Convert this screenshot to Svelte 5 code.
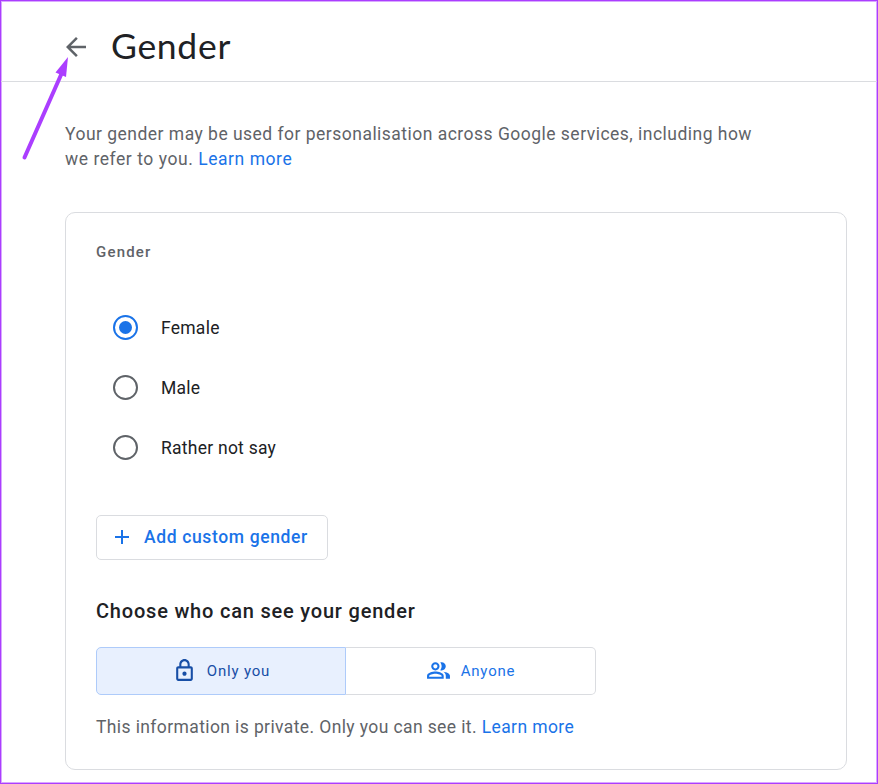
<script lang="ts">
  let gender = $state('Female');
  let visibility = $state('only');

  const options = ['Female', 'Male', 'Rather not say'];
</script>

<div class="page">
  <header>
    <button class="back" aria-label="Back">
      <svg width="30" height="30" viewBox="0 0 24 24" fill="currentColor">
        <path d="M20 11H7.83l5.59-5.59L12 4l-8 8 8 8 1.41-1.41L7.83 13H20v-2z" />
      </svg>
    </button>
    <h1>Gender</h1>
  </header>

  <main>
    <p class="intro">
      <span class="line-one">Your gender may be used for personalisation across Google services, including how</span><br />
      <span class="line-two">we refer to you. <a href="#more">Learn more</a></span>
    </p>

    <section class="card">
      <h2>Gender</h2>

      <div class="options" role="radiogroup">
        {#each options as option}
          <label>
            <input type="radio" name="gender" value={option} bind:group={gender} />
            <span class="radio"></span>
            <span class="option-text">{option}</span>
          </label>
        {/each}
      </div>

      <button class="add">
        <svg width="22" height="22" viewBox="0 0 22 22" stroke="currentColor" stroke-width="2">
          <path d="M11 4v14M4 11h14" />
        </svg>
        <span>Add custom gender</span>
      </button>

      <h3>Choose who can see your gender</h3>

      <div class="segments">
        <button class:selected={visibility === 'only'} onclick={() => (visibility = 'only')}>
          <svg width="25" height="25" viewBox="0 0 24 24" fill="currentColor">
            <path d="M18 8h-1V6c0-2.76-2.24-5-5-5S7 3.240 7 6v2H6c-1.100 0-2 .9-2 2v10c0 1.100.9 2 2 2h12c1.100 0 2-.9 2-2V10c0-1.100-.9-2-2-2zM9 6c0-1.660 1.340-3 3-3s3 1.340 3 3v2H9V6zm9 14H6V10h12v10zm-6-3c1.100 0 2-.9 2-2s-.9-2-2-2-2 .9-2 2 .9 2 2 2z" />
          </svg>
          <span>Only you</span>
        </button>
        <button class:selected={visibility === 'anyone'} onclick={() => (visibility = 'anyone')}>
          <svg width="25" height="25" viewBox="0 0 24 24" fill="currentColor">
            <path d="M9 12c2.210 0 4-1.790 4-4s-1.790-4-4-4-4 1.790-4 4 1.790 4 4 4zm0-6c1.100 0 2 .9 2 2s-.9 2-2 2-2-.9-2-2 .9-2 2-2zM9 13c-2.670 0-8 1.340-8 4v3h16v-3c0-2.660-5.330-4-8-4zm6 5H3v-.99C3.200 16.290 6.300 15 9 15s5.800 1.290 6 2v1zM15 12c2.210 0 4-1.790 4-4s-1.790-4-4-4c-.47 0-.91.1-1.330.24C14.500 5.270 15 6.580 15 8s-.5 2.730-1.330 3.760c.42.14.86.24 1.330.24zM16.670 13.130C18.040 14.060 19 15.320 19 17v3h4v-3c0-2.180-3.570-3.470-6.330-3.870z" />
          </svg>
          <span>Anyone</span>
        </button>
      </div>

      <p class="note">This information is private. Only you can see it. <a href="#more">Learn more</a></p>
    </section>
  </main>

  <svg class="pointer" width="60" height="110" viewBox="0 0 60 110">
    <path d="M9.500 102.500L47.500 16.500" stroke="#ab3eff" stroke-width="4" stroke-linecap="round" />
    <path d="M53 2L40.500 17.500L51 22Z" fill="#ab3eff" />
  </svg>
</div>

<style>
  :global(body) {
    margin: 0;
    background: #fff;
  }

  .page {
    position: relative;
    box-sizing: border-box;
    width: 878px;
    height: 784px;
    border: 1px solid #ab3eff;
    box-shadow: inset 0 0 0 1px #d9a8ff;
    overflow: hidden;
    font-family: Roboto, 'Liberation Sans', sans-serif;
    color: #202124;
  }

  button {
    font: inherit;
    margin: 0;
    padding: 0;
    background: none;
    border: none;
    cursor: pointer;
  }

  svg {
    display: block;
    flex: none;
  }

  a {
    color: #1a73e8;
    text-decoration: none;
  }

  header {
    display: flex;
    align-items: center;
    height: 80px;
    padding: 0 0 0 60px;
    border-bottom: 1px solid #dadce0;
  }

  .back {
    color: #5f6368;
    margin-top: 12px;
  }

  h1 {
    margin: 9px 0 0 20px;
    font-family: Lato, sans-serif;
    font-size: 35.5px;
    font-weight: 400;
    line-height: 45px;
    letter-spacing: 0.7px;
    white-space: nowrap;
  }

  main {
    padding: 40px 30px 0 64px;
  }

  .intro {
    margin: 0;
    font-size: 17.5px;
    line-height: 25px;
    color: #5f6368;
    white-space: nowrap;
  }

  .line-one {
    letter-spacing: 0.48px;
  }

  .line-two {
    letter-spacing: 0.55px;
  }

  .card {
    display: flex;
    flex-direction: column;
    align-items: flex-start;
    box-sizing: border-box;
    width: 782px;
    height: 558px;
    margin-top: 40px;
    padding: 29px 30px 0;
    border: 1px solid #dadce0;
    border-radius: 10px;
  }

  h2 {
    margin: 0;
    font-size: 15px;
    font-weight: 500;
    line-height: 20px;
    letter-spacing: 1.2px;
    color: #5f6368;
  }

  .options {
    margin-top: 35px;
    padding-left: 17px;
  }

  label {
    display: flex;
    align-items: center;
    height: 60px;
    cursor: pointer;
  }

  input {
    position: absolute;
    opacity: 0;
    pointer-events: none;
  }

  .radio {
    display: flex;
    align-items: center;
    justify-content: center;
    box-sizing: border-box;
    width: 25px;
    height: 25px;
    border: 2px solid #5f6368;
    border-radius: 50%;
  }

  input:checked + .radio {
    border-color: #1a73e8;
  }

  input:checked + .radio::after {
    content: '';
    width: 13px;
    height: 13px;
    border-radius: 50%;
    background: #1a73e8;
  }

  .option-text {
    margin-left: 23px;
    padding-top: 2px;
    font-size: 17.5px;
    letter-spacing: 0.25px;
  }

  .add {
    display: flex;
    align-items: center;
    gap: 11px;
    box-sizing: border-box;
    width: 232px;
    height: 45px;
    margin-top: 38px;
    padding: 0 0 2px 14px;
    border: 1px solid #dadce0;
    border-radius: 5px;
    color: #1a73e8;
    font-size: 17.5px;
    font-weight: 500;
    letter-spacing: 0.63px;
    white-space: nowrap;
  }

  h3 {
    margin: 36px 0 0;
    font-size: 20px;
    font-weight: 500;
    line-height: 30px;
    letter-spacing: 0.8px;
    white-space: nowrap;
  }

  .segments {
    display: flex;
    margin-top: 21px;
  }

  .segments button {
    display: flex;
    align-items: center;
    justify-content: center;
    gap: 10px;
    box-sizing: border-box;
    width: 250px;
    height: 48px;
    border: 1px solid #dadce0;
    color: #1a73e8;
    font-size: 15px;
    letter-spacing: 0.8px;
  }

  .segments svg {
    margin-bottom: 2px;
  }

  .segments button:first-child {
    border-radius: 5px 0 0 5px;
  }

  .segments button:last-child {
    border-left: none;
    border-radius: 0 5px 5px 0;
  }

  .segments button.selected {
    background: #e8f0fe;
    border-color: #aecbfa;
    color: #174ea6;
  }

  .note {
    margin: 20px 0 0;
    font-size: 17.5px;
    line-height: 25px;
    letter-spacing: 0.39px;
    color: #5f6368;
    white-space: nowrap;
  }

  .pointer {
    position: absolute;
    left: 14px;
    top: 54px;
    pointer-events: none;
  }
</style>
